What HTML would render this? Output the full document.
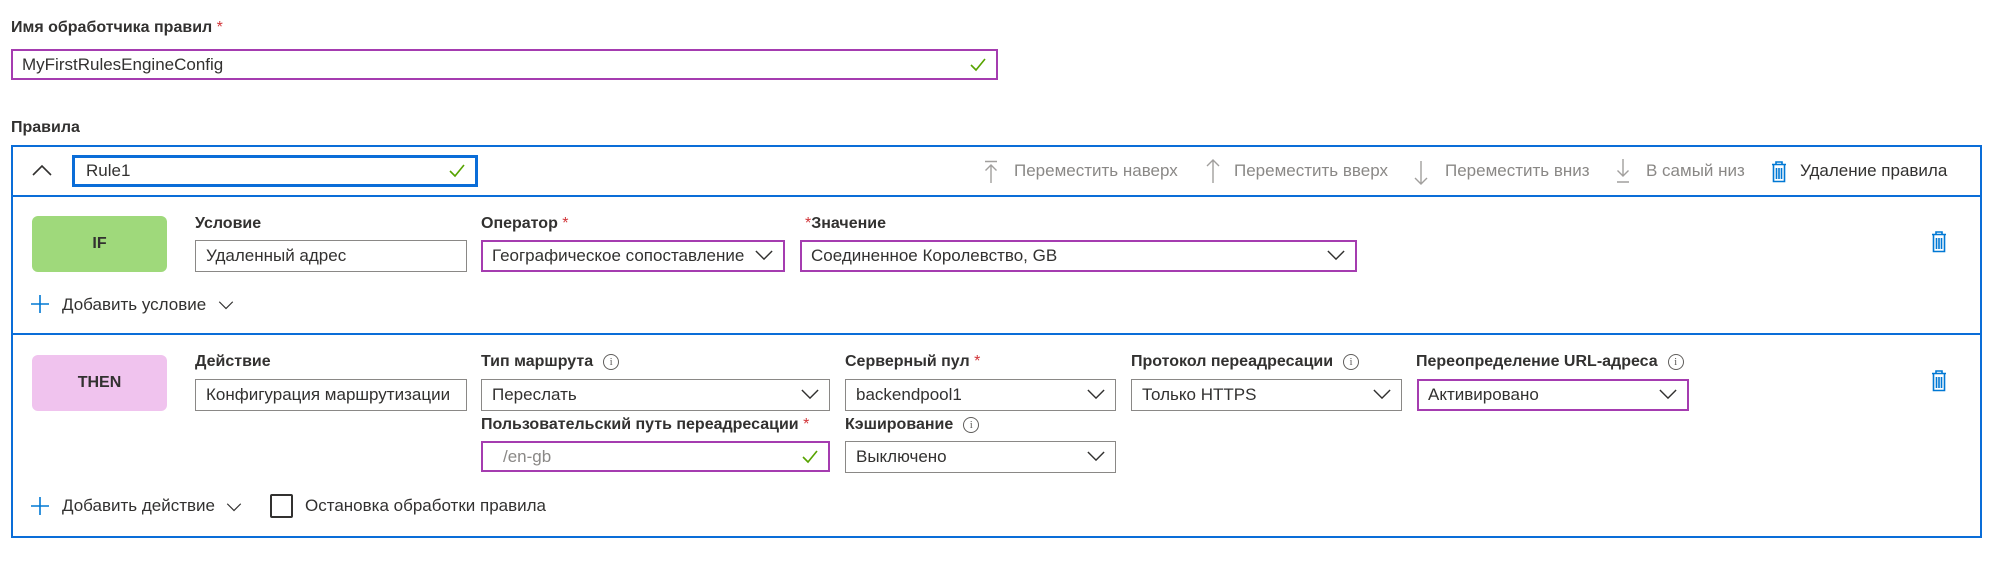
<!DOCTYPE html>
<html><head><meta charset="utf-8"><style>
*{box-sizing:border-box;margin:0;padding:0}
body{width:2000px;height:571px;background:#fff;font-family:"Liberation Sans",sans-serif;color:#323130;position:relative;overflow:hidden;font-size:17px}
.a{position:absolute;white-space:nowrap}
.lbl{font-weight:bold;font-size:16px;line-height:20px}
.req{color:#d13438;font-weight:normal}
.box{position:absolute;border:1px solid #8a8886;background:#fff;font-size:17px;line-height:29px;padding-left:10px;white-space:nowrap;overflow:hidden}
.pur{border:2px solid #a53cb0;line-height:27px;padding-left:9px}
.chev{position:absolute;right:10px;top:50%;margin-top:-6px}
.gray{color:#8a8886}
.info{display:inline-block;width:16px;height:16px;border:1px solid #605e5c;border-radius:50%;font-size:11px;line-height:14px;text-align:center;font-weight:normal;color:#605e5c;vertical-align:1px;margin-left:10px;font-family:"Liberation Serif",serif}
</style></head><body>
<svg width="0" height="0" style="position:absolute"><defs>
<symbol id="cv" viewBox="0 0 20 12"><path d="M1 1 L10 10 L19 1" fill="none" stroke="#323130" stroke-width="1.6"/></symbol>
<symbol id="tr" viewBox="0 0 16 22"><path d="M5 3 V1 H11 V3 M1 3.5 H15 M2.5 4 V20.5 H13.5 V4 M5.5 7 V18 M8 7 V18 M10.5 7 V18" fill="none" stroke="#0078d4" stroke-width="1.6"/></symbol>
<symbol id="ck" viewBox="0 0 16 14"><path d="M1 7 L6 12 L15 1" fill="none" stroke="#57a300" stroke-width="1.6"/></symbol>
</defs></svg>

<div class="a lbl" style="left:11px;top:18px">Имя обработчика правил <span class="req">*</span></div>
<div class="box pur" style="left:11px;top:49px;width:987px;height:31px">MyFirstRulesEngineConfig<svg class="chev" width="16" height="14" style="margin-top:-7px"><use href="#ck"/></svg></div>

<div class="a lbl" style="left:11px;top:118px">Правила</div>

<div class="a" style="left:11px;top:145px;width:1971px;height:393px;border:2px solid #0a6dd8"></div>
<div class="a" style="left:11px;top:195px;width:1971px;height:2px;background:#0a6dd8"></div>
<div class="a" style="left:11px;top:333px;width:1971px;height:2px;background:#0a6dd8"></div>

<svg class="a" style="left:32px;top:164px" width="20" height="12"><path d="M1 11 L10 2 L19 11" fill="none" stroke="#323130" stroke-width="1.6"/></svg>
<div class="box" style="left:72px;top:155px;width:406px;height:32px;border:3px solid #0a6dd8;line-height:26px;padding-left:11px">Rule1<svg class="chev" width="16" height="14" style="margin-top:-7px"><use href="#ck"/></svg></div>

<svg class="a" style="left:983px;top:160px" width="16" height="24"><path d="M2 1.5 H14 M8 23 V5 M2.5 10.5 L8 5 L13.5 10.5" fill="none" stroke="#a19f9d" stroke-width="1.4"/></svg>
<div class="a gray" style="left:1014px;top:161px">Переместить наверх</div>
<svg class="a" style="left:1205px;top:158px" width="16" height="26"><path d="M8 25 V2 M2 8 L8 2 L14 8" fill="none" stroke="#a19f9d" stroke-width="1.4"/></svg>
<div class="a gray" style="left:1234px;top:161px">Переместить вверх</div>
<svg class="a" style="left:1413px;top:160px" width="16" height="26"><path d="M8 1 V24 M2 18 L8 24 L14 18" fill="none" stroke="#a19f9d" stroke-width="1.4"/></svg>
<div class="a gray" style="left:1445px;top:161px">Переместить вниз</div>
<svg class="a" style="left:1615px;top:158px" width="16" height="26"><path d="M8 1 V18 M2.5 12.5 L8 18 L13.5 12.5 M2 24 H14" fill="none" stroke="#a19f9d" stroke-width="1.4"/></svg>
<div class="a gray" style="left:1646px;top:161px">В самый низ</div>
<svg class="a" style="left:1771px;top:161px" width="16" height="22"><use href="#tr"/></svg>
<div class="a" style="left:1800px;top:161px">Удаление правила</div>

<!-- IF -->
<div class="a" style="left:32px;top:216px;width:135px;height:56px;background:#9fd97b;border-radius:6px;text-align:center;line-height:56px;font-weight:bold;font-size:16px">IF</div>
<div class="a lbl" style="left:195px;top:214px">Условие</div>
<div class="box" style="left:195px;top:240px;width:272px;height:32px">Удаленный адрес</div>
<div class="a lbl" style="left:481px;top:214px">Оператор <span class="req">*</span></div>
<div class="box pur" style="left:481px;top:240px;width:304px;height:32px">Географическое сопоставление<svg class="chev" width="18" height="11"><use href="#cv"/></svg></div>
<div class="a lbl" style="left:805px;top:214px"><span class="req">*</span>Значение</div>
<div class="box pur" style="left:800px;top:240px;width:557px;height:32px">Соединенное Королевство, GB<svg class="chev" width="18" height="11"><use href="#cv"/></svg></div>
<svg class="a" style="left:1931px;top:231px" width="16" height="22"><use href="#tr"/></svg>

<svg class="a" style="left:31px;top:295px" width="18" height="18"><path d="M9 0 V18 M0 9 H18" stroke="#0078d4" stroke-width="1.6"/></svg>
<div class="a" style="left:62px;top:295px">Добавить условие</div>
<svg class="a" style="left:218px;top:301px" width="16" height="9"><use href="#cv"/></svg>

<!-- THEN -->
<div class="a" style="left:32px;top:355px;width:135px;height:56px;background:#f0c3ee;border-radius:6px;text-align:center;line-height:56px;font-weight:bold;font-size:16px">THEN</div>
<div class="a lbl" style="left:195px;top:352px">Действие</div>
<div class="box" style="left:195px;top:379px;width:272px;height:32px">Конфигурация маршрутизации</div>
<div class="a lbl" style="left:481px;top:352px">Тип маршрута<span class="info">i</span></div>
<div class="box" style="left:481px;top:379px;width:349px;height:32px">Переслать<svg class="chev" width="18" height="11"><use href="#cv"/></svg></div>
<div class="a lbl" style="left:845px;top:352px">Серверный пул <span class="req">*</span></div>
<div class="box" style="left:845px;top:379px;width:271px;height:32px">backendpool1<svg class="chev" width="18" height="11"><use href="#cv"/></svg></div>
<div class="a lbl" style="left:1131px;top:352px">Протокол переадресации<span class="info">i</span></div>
<div class="box" style="left:1131px;top:379px;width:271px;height:32px">Только HTTPS<svg class="chev" width="18" height="11"><use href="#cv"/></svg></div>
<div class="a lbl" style="left:1416px;top:352px">Переопределение URL-адреса<span class="info">i</span></div>
<div class="box pur" style="left:1417px;top:379px;width:272px;height:32px">Активировано<svg class="chev" width="18" height="11"><use href="#cv"/></svg></div>
<svg class="a" style="left:1931px;top:370px" width="16" height="22"><use href="#tr"/></svg>

<div class="a lbl" style="left:481px;top:415px">Пользовательский путь переадресации <span class="req">*</span></div>
<div class="box pur gray" style="left:481px;top:441px;width:349px;height:31px;padding-left:20px">/en-gb<svg class="chev" width="16" height="14" style="margin-top:-7px"><use href="#ck"/></svg></div>
<div class="a lbl" style="left:845px;top:415px">Кэширование<span class="info">i</span></div>
<div class="box" style="left:845px;top:441px;width:271px;height:32px">Выключено<svg class="chev" width="18" height="11"><use href="#cv"/></svg></div>

<svg class="a" style="left:31px;top:497px" width="18" height="18"><path d="M9 0 V18 M0 9 H18" stroke="#0078d4" stroke-width="1.6"/></svg>
<div class="a" style="left:62px;top:496px">Добавить действие</div>
<svg class="a" style="left:226px;top:503px" width="16" height="9"><use href="#cv"/></svg>
<div class="a" style="left:270px;top:494px;width:23px;height:24px;border:2px solid #323130;border-radius:2px"></div>
<div class="a" style="left:305px;top:496px">Остановка обработки правила</div>
</body></html>
